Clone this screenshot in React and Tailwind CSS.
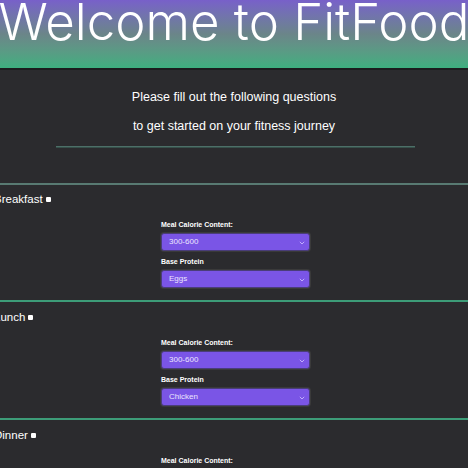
import React from "react";

function Chevron() {
  return (
    <svg width="6" height="4" viewBox="0 0 6 4" className="absolute right-[4px] top-[7px]">
      <path d="M0.8 0.8 L3 3 L5.2 0.8" fill="none" stroke="#c9b8ff" strokeWidth="0.9" />
    </svg>
  );
}

function Select({ value }) {
  return (
    <div className="relative h-[18px] w-[149px] rounded-[3px] border border-[#4a3d7a] bg-[#7a55e6] shadow-[0_0_0_1px_#3a3a3a]">
      <span className="absolute left-[7px] top-[3px] text-[8px] leading-[10px] text-[#ece5fe]">{value}</span>
      <Chevron />
    </div>
  );
}

function Section({ title, protein, lineColor, titleMt }) {
  return (
    <div className={`border-t-2 ${lineColor}`}>
      <div className={`ml-[-6px] ${titleMt} flex h-[14px] items-center gap-[3px] text-[11.5px] leading-[14px] text-white`}>
        <span>{title}</span>
        <span className="inline-block h-[5px] w-[5px] rounded-[1px] bg-white" />
      </div>
      <div className="ml-[161px] mt-[14px] flex flex-col">
        <div className="h-[10px] text-[7px] font-bold leading-[10px] text-white">Meal Calorie Content:</div>
        <div className="mt-[3px]"><Select value="300-600" /></div>
        <div className="mt-[6px] h-[10px] text-[7px] font-bold leading-[10px] text-white">Base Protein</div>
        <div className="mt-[3px]"><Select value={protein} /></div>
      </div>
      <div className="h-[12px]" />
    </div>
  );
}

export default function App() {
  return (
    <div className="h-[468px] w-[468px] overflow-hidden bg-[#2b2b2e]" style={{ fontFamily: '"Liberation Sans", Arial, sans-serif' }}>
      <div className="flex h-[68px] justify-center overflow-hidden bg-gradient-to-b from-[#7860c9] via-[#6b8589] to-[#3daf7f]">
        <div className="mt-[-10px] whitespace-nowrap text-[51px] font-light leading-[64px] text-white" style={{ fontFamily: 'Inter, sans-serif' }}>
          Welcome to FitFood
        </div>
      </div>
      <div className="h-[2px] bg-[#1c1c1e]" />
      <div className="flex flex-col items-center pt-[13px] text-[12.5px] leading-[29px] text-white">
        <div>Please fill out the following questions</div>
        <div>to get started on your fitness journey</div>
      </div>
      <div className="ml-[56px] mt-[5px] h-[2px] w-[359px] border-t border-[#4d6f68] bg-[#36504a]" />
      <div className="h-[35px]" />
      <Section title="Breakfast" protein="Eggs" lineColor="border-[#587a72]" titleMt="mt-[7px]" />
      <Section title="Lunch" protein="Chicken" lineColor="border-[#3d9c78]" titleMt="mt-[8px]" />
      <Section title="Dinner" protein="Fish" lineColor="border-[#3d9c78]" titleMt="mt-[8px]" />
    </div>
  );
}
